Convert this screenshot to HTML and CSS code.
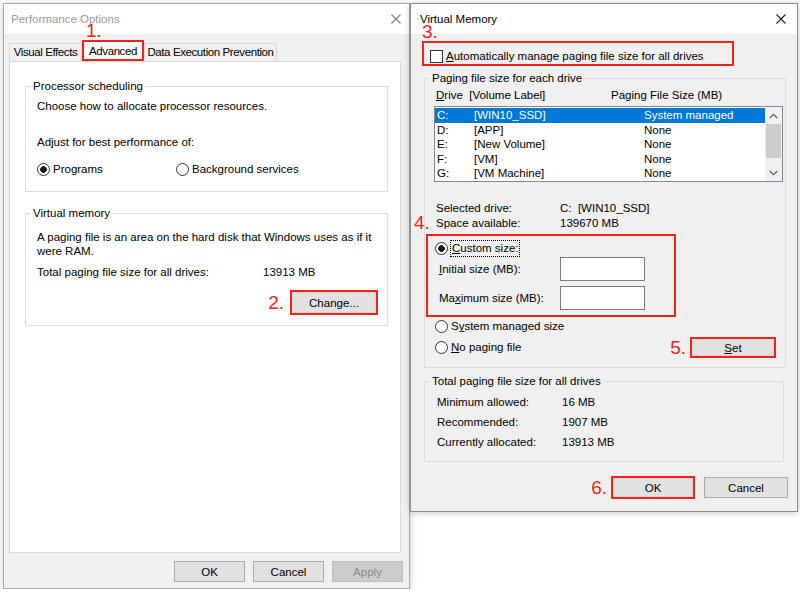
FILE: index.html
```html
<!DOCTYPE html>
<html lang="en">
<head>
<meta charset="UTF-8">
<meta name="viewport" content="width=device-width, initial-scale=1.0">
<title>Performance Options - Virtual Memory</title>
<link rel="stylesheet" href="styles.css">
</head>
<body>
<div class="desk">

    <!-- Performance Options (inactive) -->
    <div class="window perf">
        <div class="titlebar">
            <span>Performance Options</span>
            <svg class="close" width="10" height="10" viewBox="0 0 10 10"><path d="M0.5 0.5L9.5 9.5M9.5 0.5L0.5 9.5" stroke="currentColor" stroke-width="1.1" fill="none"/></svg>
        </div>
        <div class="tabs">
            <div class="tab tab-ve">Visual Effects</div>
            <div class="tab tab-adv">Advanced<span class="step step-1">1.</span></div>
            <div class="tab tab-dep">Data Execution Prevention</div>
        </div>
        <div class="panel">
            <fieldset class="group group-proc">
                <legend>Processor scheduling</legend>
                <div class="line">Choose how to allocate processor resources.</div>
                <div class="line adjust">Adjust for best performance of:</div>
                <div class="radio-row">
                    <label class="option"><span class="radio on"></span>Programs</label>
                    <label class="option"><span class="radio"></span>Background services</label>
                </div>
            </fieldset>
            <fieldset class="group group-vm">
                <legend>Virtual memory</legend>
                <p class="about">A paging file is an area on the hard disk that Windows uses as if it were RAM.</p>
                <div class="pair">
                    <span>Total paging file size for all drives:</span>
                    <span>13913 MB</span>
                </div>
                <div class="change-row">
                    <span class="step">2.</span>
                    <button class="btn marked change">Change...</button>
                </div>
            </fieldset>
        </div>
        <div class="footer">
            <button class="btn">OK</button>
            <button class="btn">Cancel</button>
            <button class="btn" disabled>Apply</button>
        </div>
    </div>

    <!-- Virtual Memory (active) -->
    <div class="window vm">
        <div class="titlebar">
            <span>Virtual Memory</span>
            <svg class="close" width="10" height="10" viewBox="0 0 10 10"><path d="M0.5 0.5L9.5 9.5M9.5 0.5L0.5 9.5" stroke="currentColor" stroke-width="1.1" fill="none"/></svg>
        </div>

        <label class="autobox">
            <span class="check"></span><span><u>A</u>utomatically manage paging file size for all drives</span>
            <span class="step step-3">3.</span>
        </label>

        <fieldset class="group group-drives">
            <legend>Paging file size for each drive</legend>
            <div class="cols">
                <span><u>D</u>rive&nbsp; [Volume Label]</span>
                <span>Paging File Size (MB)</span>
            </div>
            <div class="listbox">
                <div class="rows">
                    <div class="row selected"><span>C:</span><span>[WIN10_SSD]</span><span>System managed</span></div>
                    <div class="row"><span>D:</span><span>[APP]</span><span>None</span></div>
                    <div class="row"><span>E:</span><span>[New Volume]</span><span>None</span></div>
                    <div class="row"><span>F:</span><span>[VM]</span><span>None</span></div>
                    <div class="row"><span>G:</span><span>[VM Machine]</span><span>None</span></div>
                </div>
                <div class="scrollbar">
                    <div class="arrow"><svg width="9" height="6" viewBox="0 0 9 6"><path d="M0.8 5L4.5 1.3L8.2 5" fill="none" stroke="#606060" stroke-width="1.3"/></svg></div>
                    <div class="thumb"></div>
                    <div class="track"></div>
                    <div class="arrow"><svg width="9" height="6" viewBox="0 0 9 6"><path d="M0.8 1L4.5 4.7L8.2 1" fill="none" stroke="#606060" stroke-width="1.3"/></svg></div>
                </div>
            </div>

            <div class="info">
                <span>Selected drive:</span><span>C:&nbsp; [WIN10_SSD]</span>
                <span>Space available:</span><span>139670 MB</span>
            </div>

            <div class="custombox">
                <span class="step step-4">4.</span>
                <label class="option"><span class="radio on"></span><span class="focus"><u>C</u>ustom size:</span></label>
                <div class="size-row"><span><u>I</u>nitial size (MB):</span><input type="text" class="field"></div>
                <div class="size-row"><span>Ma<u>x</u>imum size (MB):</span><input type="text" class="field"></div>
            </div>

            <label class="option sysopt"><span class="radio"></span>S<u>y</u>stem managed size</label>
            <div class="nopage-row">
                <label class="option"><span class="radio"></span><u>N</u>o paging file</label>
                <span class="step push">5.</span>
                <button class="btn marked set"><u>S</u>et</button>
            </div>
        </fieldset>

        <fieldset class="group group-total">
            <legend>Total paging file size for all drives</legend>
            <div class="totals">
                <span>Minimum allowed:</span><span>16 MB</span>
                <span>Recommended:</span><span>1907 MB</span>
                <span>Currently allocated:</span><span>13913 MB</span>
            </div>
        </fieldset>

        <div class="vm-footer">
            <span class="step">6.</span>
            <button class="btn marked ok">OK</button>
            <button class="btn cancel">Cancel</button>
        </div>
    </div>

</div>
</body>
</html>
```

FILE: styles.css
```css
* {
    box-sizing: border-box;
}

body {
    margin: 0;
    background-color: #ffffff;
    font-family: "Liberation Sans", Arial, sans-serif;
    font-size: 11.5px;
    color: #000000;
}

.desk {
    display: flex;
    align-items: flex-start;
    padding: 3px 0 0 3px;
}

.window {
    background-color: #f0f0f0;
    border: 1px solid #a8a8a8;
    box-shadow: 0 1px 7px rgba(0, 0, 0, 0.22);
}

.titlebar {
    height: 30px;
    background-color: #ffffff;
    display: flex;
    align-items: center;
    justify-content: space-between;
    padding: 0 8px 0 7px;
}

.close {
    display: block;
}

/* red annotation numbers */
.step {
    color: #f5221b;
    font-size: 19px;
    line-height: 20px;
}

.step-1,
.step-3,
.step-4 {
    position: absolute;
}

.step-1 {
    left: 2px;
    top: -21px;
}

.step-3 {
    left: -2px;
    top: -21px;
}

.step-4 {
    left: -14px;
    top: -23px;
}

.btn {
    font-family: inherit;
    font-size: inherit;
    color: #000000;
    background-color: #e1e1e1;
    border: 1px solid #adadad;
    padding: 0;
    height: 21px;
}

.btn:disabled {
    background-color: #cccccc;
    border-color: #bfbfbf;
    color: #8a8a8a;
}

.btn.marked {
    border: 2px solid #f5221b;
    box-shadow: inset 0 0 0 1px #d4d4d4;
}

/* group boxes */
.group {
    margin: 0;
    padding: 0;
    border: 1px solid #dcdcdc;
    min-width: 0;
}

.group legend {
    padding: 0 2px;
    margin-left: 5px;
    line-height: 14px;
}

.option {
    display: flex;
    align-items: center;
    line-height: 15px;
}

.radio {
    width: 13px;
    height: 13px;
    border: 1px solid #333333;
    border-radius: 50%;
    background-color: #ffffff;
    margin-right: 3px;
    flex-shrink: 0;
}

.radio.on {
    background: radial-gradient(circle, #1a1a1a 0 3px, #ffffff 3.6px);
}

/* ---------- Performance Options ---------- */
.perf {
    width: 407px;
}

.perf .titlebar {
    color: #9a9a9a;
}

.perf .close {
    color: #808080;
}

.tabs {
    display: flex;
    align-items: flex-end;
    height: 27px;
    padding: 6px 0 0 5px;
}

.tab {
    height: 18px;
    border: 1px solid #d9d9d9;
    border-bottom: 0;
    background-color: #f0f0f0;
    text-align: center;
    line-height: 17px;
    letter-spacing: -0.4px;
}

.tab-ve {
    width: 73px;
}

.tab-adv {
    width: 62px;
    height: 21px;
    line-height: 19px;
    background-color: #ffffff;
    border: 2px solid #f5221b;
    position: relative;
}

.tab-dep {
    width: 133px;
}

.panel {
    margin-left: 5px;
    width: 392px;
    height: 492px;
    background-color: #ffffff;
    border: 1px solid #d9d9d9;
}

.panel .group {
    margin-left: 15px;
    width: 363px;
    padding: 6px 8px 14px 11px;
}

.panel .group legend {
    margin-left: -6px;
}

.group-proc {
    margin-top: 17px;
}

.line {
    line-height: 15px;
}

.adjust {
    margin-top: 21px;
}

.radio-row {
    display: grid;
    grid-template-columns: 139px auto;
    margin-top: 12px;
}

.panel .group-vm {
    margin-top: 14px;
    padding-top: 10px;
    padding-bottom: 10px;
}

.about {
    margin: 0;
    line-height: 14px;
}

.pair {
    display: grid;
    grid-template-columns: 226px auto;
    margin-top: 7px;
    line-height: 14px;
}

.change-row {
    display: flex;
    align-items: center;
    justify-content: flex-end;
    margin-top: 11px;
    padding-right: 1px;
}

.change-row .step {
    margin-right: 6px;
}

.change {
    width: 88px;
    height: 25px;
}

.footer {
    display: flex;
    justify-content: flex-end;
    gap: 8px;
    margin-top: 8px;
    padding: 0 6px 6px 0;
}

.footer .btn {
    width: 71px;
}

/* ---------- Virtual Memory ---------- */
.vm {
    width: 388px;
    border-color: #8c8c8c;
    padding-bottom: 12px;
}

.vm .titlebar {
    padding: 0 11px 0 9px;
}

.vm .close {
    color: #222222;
}

.autobox {
    position: relative;
    display: flex;
    align-items: center;
    width: 312px;
    height: 25px;
    margin: 7px 0 0 11px;
    padding: 6px 0 0 6px;
    border: 2px solid #f5221b;
    line-height: 15px;
}

.check {
    width: 13px;
    height: 13px;
    border: 1px solid #333333;
    background-color: #ffffff;
    margin-right: 3px;
}

.group-drives {
    margin: 5px 0 0 13px;
    width: 362px;
    padding-bottom: 9px;
}

.cols {
    display: grid;
    grid-template-columns: 175px auto;
    margin: 3px 0 0 11px;
    line-height: 15px;
}

.listbox {
    display: flex;
    width: 349px;
    height: 76px;
    margin: 3px 0 0 9px;
    border: 1px solid #828790;
    background-color: #ffffff;
}

.rows {
    flex: 1;
    padding-top: 1px;
}

.row {
    display: grid;
    grid-template-columns: 37px 170px auto;
    height: 14.6px;
    line-height: 14.6px;
    padding-left: 2px;
}

.row.selected {
    background-color: #0078d7;
    color: #ffffff;
}

.scrollbar {
    width: 17px;
    display: flex;
    flex-direction: column;
    background-color: #f0f0f0;
}

.arrow {
    height: 17px;
    display: flex;
    align-items: center;
    justify-content: center;
}

.thumb {
    height: 34px;
    margin: 0 1px;
    background-color: #cdcdcd;
}

.track {
    flex: 1;
}

.info {
    display: grid;
    grid-template-columns: 124px auto;
    margin: 19px 0 0 11px;
    line-height: 15px;
}

.custombox {
    position: relative;
    width: 250px;
    margin: 3px 0 0 1px;
    padding: 5px 0 5px 7px;
    border: 2px solid #f5221b;
}

.focus {
    outline: 1px dotted #000000;
    outline-offset: 0;
    padding: 0 1px;
}

.size-row {
    display: grid;
    grid-template-columns: 121px 85px;
    align-items: center;
    padding-left: 4px;
    margin-top: 1px;
}

.size-row + .size-row {
    margin-top: 5px;
}

.field {
    width: 85px;
    height: 24px;
    border: 1px solid #7a7a7a;
    background-color: #ffffff;
    font-family: inherit;
    font-size: inherit;
}

.sysopt {
    margin: 2px 0 0 10px;
}

.nopage-row {
    display: flex;
    align-items: center;
    height: 21px;
    margin: 3px 9px 0 10px;
}

.push {
    margin-left: auto;
    margin-right: 4px;
}

.set {
    width: 86px;
}

.group-total {
    margin: 6px 0 0 13px;
    width: 360px;
    padding: 4px 0 9px 12px;
}

.group-total legend {
    margin-left: -7px;
}

.totals {
    display: grid;
    grid-template-columns: 125px auto;
    line-height: 20px;
}

.vm-footer {
    display: flex;
    align-items: center;
    justify-content: flex-end;
    margin-top: 14px;
    padding-right: 9px;
}

.vm-footer .step {
    margin-right: 4px;
}

.ok {
    width: 84px;
    height: 23px;
}

.cancel {
    width: 84px;
    margin-left: 9px;
}
```
